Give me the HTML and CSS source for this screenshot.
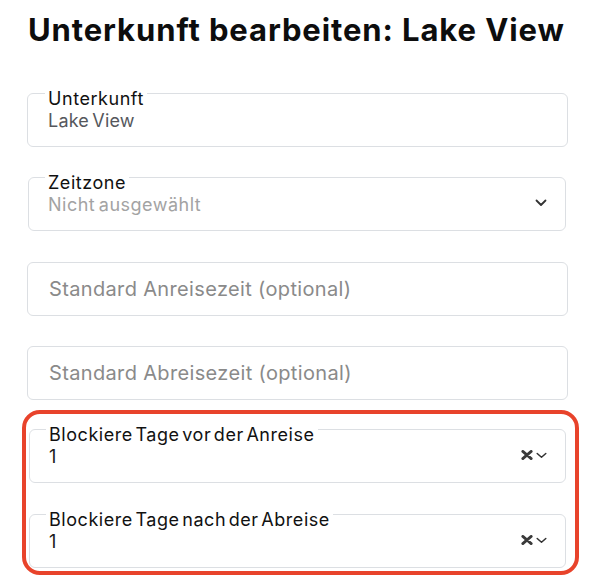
FILE: index.html
```html
<!DOCTYPE html>
<html lang="de">
<head>
<meta charset="utf-8">
<title>Unterkunft bearbeiten</title>
<link rel="stylesheet" href="styles.css">
</head>
<body>
<main class="page">
  <h1 class="title">Unterkunft bearbeiten: Lake View</h1>
  <form class="form">
    <fieldset class="field field-first">
      <legend class="field-label">Unterkunft</legend>
      <div class="field-row"><span class="value value-muted">Lake View</span></div>
    </fieldset>

    <fieldset class="field field-select">
      <legend class="field-label">Zeitzone</legend>
      <div class="field-row">
        <span class="value value-placeholder">Nicht ausgewählt</span>
        <span class="icons">
          <svg class="chevron" width="12" height="8" viewBox="0 0 12 8"><path d="M1.5 1.5 L6 6 L10.5 1.5" fill="none" stroke="#333" stroke-width="1.8" stroke-linecap="round" stroke-linejoin="round"/></svg>
        </span>
      </div>
    </fieldset>

    <div class="input input-first">Standard Anreisezeit (optional)</div>
    <div class="input">Standard Abreisezeit (optional)</div>

    <div class="highlight">
      <fieldset class="field field-select field-in-hl">
        <legend class="field-label">Blockiere Tage vor der Anreise</legend>
        <div class="field-row">
          <span class="value">1</span>
          <span class="icons">
            <svg class="clear" width="12" height="10" viewBox="0 0 12 10"><path d="M1.8 1.4 L10.2 8.6 M10.2 1.4 L1.8 8.6" fill="none" stroke="#3a3a3a" stroke-width="2.8" stroke-linecap="round"/></svg>
            <svg class="chevron-sm" width="11" height="7" viewBox="0 0 11 7"><path d="M1.2 1.5 L5.5 5.3 L9.8 1.5" fill="none" stroke="#333" stroke-width="1.5" stroke-linecap="round" stroke-linejoin="round"/></svg>
          </span>
        </div>
      </fieldset>
      <fieldset class="field field-select field-second-hl">
        <legend class="field-label">Blockiere Tage nach der Abreise</legend>
        <div class="field-row">
          <span class="value">1</span>
          <span class="icons">
            <svg class="clear" width="12" height="10" viewBox="0 0 12 10"><path d="M1.8 1.4 L10.2 8.6 M10.2 1.4 L1.8 8.6" fill="none" stroke="#3a3a3a" stroke-width="2.8" stroke-linecap="round"/></svg>
            <svg class="chevron-sm" width="11" height="7" viewBox="0 0 11 7"><path d="M1.2 1.5 L5.5 5.3 L9.8 1.5" fill="none" stroke="#333" stroke-width="1.5" stroke-linecap="round" stroke-linejoin="round"/></svg>
          </span>
        </div>
      </fieldset>
    </div>
  </form>
</main>
</body>
</html>
```

FILE: styles.css
```css
* {
  box-sizing: border-box;
}

html, body {
  margin: 0;
  padding: 0;
  background: #ffffff;
}

body {
  font-family: Inter, "Noto Sans", "Liberation Sans", sans-serif;
  color: #111111;
}

.page {
  width: 541px;
  margin-left: 27px;
  padding-top: 12px;
}

.title {
  margin: 0 0 0 1px;
  font-size: 31px;
  line-height: 36px;
  font-weight: 700;
  letter-spacing: 0.9px;
  color: #0d0d0d;
  white-space: nowrap;
}

.form {
  display: flex;
  flex-direction: column;
}

.field {
  margin: 14px 0 0;
  padding: 0 18px 15px 20px;
  border: 1px solid #dcdfe3;
  border-radius: 6px;
  min-width: 0;
}

.field-first {
  margin-top: 29px;
}

.field-select {
  margin-left: 1px;
  margin-right: 2px;
  padding-left: 19px;
}

.field-label {
  margin-left: -3px;
  padding: 12px 3px 0;
  font-size: 18px;
  line-height: 20px;
  letter-spacing: 0.55px;
  word-spacing: -3px;
  color: #111111;
}

.field-row {
  display: flex;
  align-items: center;
  justify-content: space-between;
  margin-top: 2px;
  height: 20px;
}

.value {
  font-size: 18px;
  line-height: 20px;
  color: #1a1a1a;
}

.value-muted {
  color: #55575c;
  letter-spacing: 0.2px;
  word-spacing: -2px;
}

.value-placeholder {
  color: #a3a3a3;
  letter-spacing: 0.5px;
  word-spacing: -2px;
}

.icons {
  display: flex;
  align-items: center;
  gap: 3px;
  margin-bottom: 5px;
}

.chevron {
  display: block;
}

.clear {
  display: block;
}

.chevron-sm {
  display: block;
  margin-top: 2px;
}

.input {
  margin-top: 30px;
  height: 54px;
  display: flex;
  align-items: center;
  padding: 0 21px 0 21px;
  border: 1px solid #dcdfe3;
  border-radius: 6px;
  font-size: 20px;
  letter-spacing: 0.35px;
  color: #8a8a8a;
}

.input-first {
  margin-top: 31px;
}

.highlight {
  margin: 10px -11px 0 -5px;
  padding: 0 9px 3px 3px;
  border: 4px solid #e8432b;
  border-radius: 18px;
}

.highlight .field-select {
  margin-left: 0;
  margin-right: 0;
}

.field-in-hl {
  margin-top: -1px;
}

.field-second-hl {
  margin-top: 15px;
}
```
